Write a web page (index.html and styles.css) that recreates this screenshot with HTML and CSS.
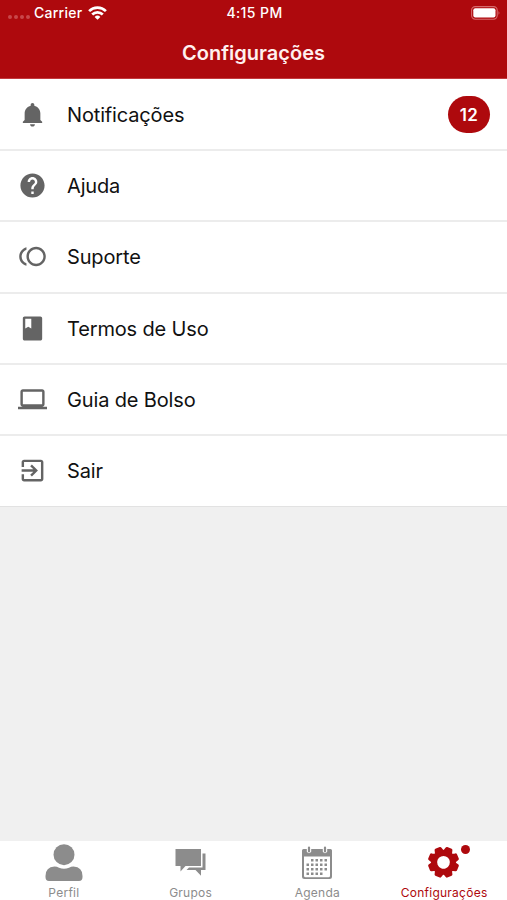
FILE: index.html
```html
<!DOCTYPE html>
<html lang="pt-BR">
<head>
<meta charset="utf-8">
<title>Configurações</title>
<link rel="stylesheet" href="styles.css">
</head>
<body>
<div class="app">
  <header class="header">
    <div class="status">
      <div class="carrier">
        <span class="signal"><i></i><i></i><i></i><i></i></span>
        <span class="carrier-name">Carrier</span>
        <svg class="wifi" viewBox="0 0 19 14" fill="none" stroke="#fff" stroke-width="2.700"><path d="M1.100 5.100a12 12 0 0 1 16.800 0M4.200 8.500a7.600 7.600 0 0 1 10.600 0"/><path d="M9.500 13.800 6.600 10.900a4.200 4.200 0 0 1 5.800 0z" fill="#fff" stroke="none"/></svg>
      </div>
      <span class="time">4:15 PM</span>
      <svg class="battery" viewBox="0 0 30 14"><rect x=".6" y=".6" width="25.6" height="12.6" rx="3.6" fill="none" stroke="#d66a6c" stroke-width="1.1"/><rect x="2.3" y="2.300" width="22.200" height="9.200" rx="2" fill="#fff"/><path d="M27.600 4.800q1.600 2.100 0 4.300z" fill="#de8a8c"/></svg>
    </div>
    <h1 class="title">Configurações</h1>
  </header>
  <main class="list">
    <a class="row"><svg class="icon" viewBox="0 0 24 24"><path d="M12 22c1.100 0 2-.9 2-2h-4c0 1.100.9 2 2 2zm6.500-5.500V11c0-3.070-2.130-5.640-5-6.320V4c0-.830-.670-1.500-1.500-1.500s-1.500.670-1.500 1.500v.680C7.630 5.360 5.500 7.930 5.500 11v5.500L4 18v1h16v-1l-1.500-1.500z"/></svg><span class="label">Notificações</span><span class="badge">12</span></a>
    <a class="row"><svg class="icon" viewBox="0 0 24 24"><path d="M12 2C6.480 2 2 6.480 2 12s4.480 10 10 10 10-4.480 10-10S17.520 2 12 2zm1 17h-2v-2h2v2zm2.070-7.750-.9.920C13.450 12.900 13 13.500 13 15h-2v-.5c0-1.100.450-2.100 1.170-2.830l1.240-1.260c.370-.360.590-.860.590-1.410 0-1.100-.9-2-2-2s-2 .9-2 2H8c0-2.210 1.790-4 4-4s4 1.790 4 4c0 .880-.360 1.680-.930 2.250z"/></svg><span class="label">Ajuda</span></a>
    <a class="row"><svg class="icon" viewBox="0 0 24 24"><path d="M15 4c-4.420 0-8 3.580-8 8s3.580 8 8 8 8-3.580 8-8-3.580-8-8-8zm0 14c-3.310 0-6-2.690-6-6s2.690-6 6-6 6 2.690 6 6-2.690 6-6 6zM3 12c0-2.610 1.670-4.830 4-5.650V4.260C3.550 5.150 1 8.270 1 12s2.550 6.850 6 7.740v-2.090c-2.330-.820-4-3.040-4-5.650z"/></svg><span class="label">Suporte</span></a>
    <a class="row"><svg class="icon" viewBox="0 0 24 24"><path d="M18.500 2h-13C4.700 2 4 2.700 4 3.500v17c0 .8.700 1.500 1.500 1.500h13c.8 0 1.500-.7 1.500-1.500v-17c0-.8-.7-1.500-1.500-1.500zM6 4h5v8l-2.500-1.500L6 12V4z"/></svg><span class="label">Termos de Uso</span></a>
    <a class="row"><svg class="icon" viewBox="0 0 24 24"><path d="M20 18c1.100 0 1.990-.9 1.990-2L22 5.500c0-1.100-.9-2-2-2H4c-1.100 0-2 .9-2 2V16c0 1.100.9 2 2 2H0v2h24v-2h-4zM4 5.500h16V16H4V5.500z"/></svg><span class="label">Guia de Bolso</span></a>
    <a class="row"><svg class="icon" viewBox="0 0 24 24"><path d="M10.090 15.590 11.500 17l5-5-5-5-1.410 1.410L12.670 11H3v2h9.670l-2.580 2.590zM19 3H5c-1.110 0-2 .9-2 2v4h2V5h14v14H5v-4H3v4c0 1.100.890 2 2 2h14c1.100 0 2-.9 2-2V5c0-1.100-.9-2-2-2z"/></svg><span class="label">Sair</span></a>
  </main>
  <nav class="tabs">
    <a class="tab"><svg class="tab-icon" viewBox="0 0 40 40"><circle cx="20" cy="13.700" r="10.500"/><path d="M1.500 36V35q0-9 9-9.500 2.500 0 4.500 1.200 5 2.200 10 0 2-1.200 4.500-1.200 9 .5 9 9.500v1q0 4-3.500 4H5q-3.500 0-3.500-4z"/></svg><span class="tab-label">Perfil</span></a>
    <a class="tab"><svg class="tab-icon" viewBox="0 0 40 40"><path d="M4.500 8H30v17H14.500l-5 5.500V25h-5zM31.500 12.500h3V29H30v5.800L24.500 29h-9l2.500-2.500h13.500z"/></svg><span class="tab-label">Grupos</span></a>
    <a class="tab"><svg class="tab-icon" viewBox="0 0 40 40"><path fill-rule="evenodd" d="M6.500 8H9.800v2.800q2.200 2.800 4.400 0V8h11.600v2.800q2.200 2.800 4.400 0V8h3.300q1.500 0 1.500 1.500V35.500q0 2.500-2.500 2.500h-25Q5 38 5 35.500v-26Q5 8 6.500 8zM7 15.500v19.200q0 1.500 1.500 1.500h23q1.500 0 1.500-1.500V15.500z"/><path d="M12 6.500v4M28 6.500v4" stroke="#8c8c8c" stroke-width="2.200" stroke-linecap="round"/><path d="M14 19.200h16.500M9.500 23.700h21M9.500 28.200h21M9.500 32.700h16.500" stroke="#8c8c8c" stroke-width="2.500" stroke-dasharray="2.500 2"/></svg><span class="tab-label">Agenda</span></a>
    <a class="tab active"><svg class="tab-icon" viewBox="0 0 40 40"><defs><path id="tooth" d="M-5.500-10.500Q-4.200-12-3.800-14.500-3.600-15.800-2.400-15.900H2.400Q3.600-15.800 3.800-14.500 4.200-12 5.500-10.500z"/></defs><g transform="translate(19.500 21.300) rotate(22.500) scale(.98)" fill="#ae090d"><circle r="9.300" fill="none" stroke="#ae090d" stroke-width="5.600"/><use href="#tooth"/><use href="#tooth" transform="rotate(45)"/><use href="#tooth" transform="rotate(90)"/><use href="#tooth" transform="rotate(135)"/><use href="#tooth" transform="rotate(180)"/><use href="#tooth" transform="rotate(225)"/><use href="#tooth" transform="rotate(270)"/><use href="#tooth" transform="rotate(315)"/></g></svg><i class="dot"></i><span class="tab-label">Configurações</span></a>
  </nav>
</div>
</body>
</html>
```
FILE: styles.css
```css
* { box-sizing: border-box; }
body { margin: 0; font-family: Inter, "Liberation Sans", sans-serif; background: #f0f0f0; }
.app { height: 900px; display: flex; flex-direction: column; overflow: hidden; }
.header { height: 79px; flex: none; background: #ae090d; color: #fff; border-bottom: 1px solid #c33a3e; }
.status { height: 26px; display: grid; grid-template-columns: 1fr auto 1fr; align-items: center; padding: 0 6px 0 8px; }
.carrier { display: flex; align-items: center; }
.signal { display: flex; gap: 2px; width: 26px; padding-top: 8px; }
.signal i { width: 4px; height: 4px; border-radius: 50%; background: #c8474a; }
.carrier-name, .time { font-size: 14px; line-height: 26px; font-weight: 500; }
.carrier-name { letter-spacing: .25px; }
.time { letter-spacing: .4px; }
.wifi { width: 19px; height: 14px; margin-left: 6px; }
.battery { width: 30px; height: 14px; justify-self: end; }
.title { margin: 10px 0 0; font-size: 20px; line-height: 34px; font-weight: 600; text-align: center; color: #fff0ef; }
.list { flex: none; background: #fff; padding-top: 1px; }
.row { height: 71.2px; display: flex; align-items: center; border-bottom: 2px solid #ececec; padding: 1px 17px 0 18px; }
.row:last-child { border-bottom: 1px solid #e2e2e2; padding-top: 0; padding-bottom: 1px; }
.icon { width: 29px; height: 29px; margin: -1px 20px 0 0; fill: #646464; flex: none; }
.label { font-size: 20px; line-height: 26px; letter-spacing: -.15px; color: #111; }
.badge { margin-left: auto; width: 42px; height: 37px; border-radius: 18.5px; background: #ae090d; color: #fff; font-size: 17px; font-weight: 600; line-height: 38px; letter-spacing: .4px; text-align: center; }
.row:first-child .badge { margin-top: -2px; }
.tabs { height: 59px; margin-top: auto; background: #fff; display: grid; grid-template-columns: repeat(4, 1fr); }
.tab { position: relative; display: flex; flex-direction: column; align-items: center; color: #8c8c8c; }
.tab-icon { width: 40px; height: 40px; margin-left: 1px; fill: #8c8c8c; }
.tab-label { margin: 4px 0 0 1px; font-size: 12px; line-height: 16px; letter-spacing: .25px; }
.active { color: #ae090d; }
.dot { position: absolute; left: 81px; top: 4px; width: 9px; height: 9px; border-radius: 50%; background: #ae090d; }
```
